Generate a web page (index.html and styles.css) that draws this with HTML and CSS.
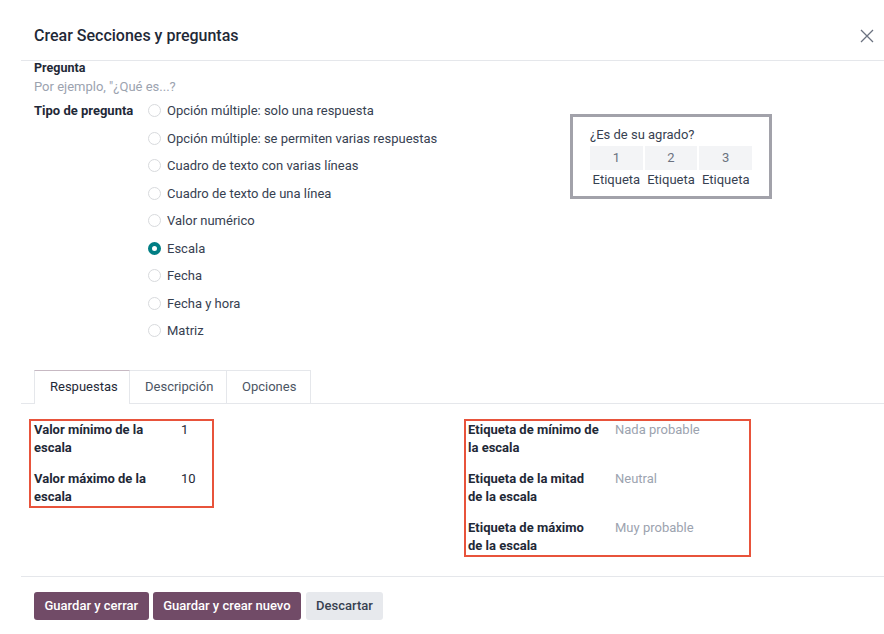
FILE: index.html
```html
<!DOCTYPE html>
<html lang="es">
<head>
    <meta charset="UTF-8">
    <meta name="viewport" content="width=device-width, initial-scale=1.0">
    <title>Crear Secciones y preguntas</title>
    <link rel="stylesheet" href="styles.css">
</head>
<body>
    <div class="modal">
        <!-- Cabecera -->
        <header class="modal-header">
            <h4 class="modal-title">Crear Secciones y preguntas</h4>
            <button class="btn-close" aria-label="Cerrar">
                <svg width="14" height="14" viewBox="0 0 14 14"><path d="M1 1L13 13M13 1L1 13" stroke="#6b7280" stroke-width="1.3" fill="none"/></svg>
            </button>
        </header>

        <!-- Cuerpo -->
        <main class="modal-body">
            <div class="field-question">
                <div class="question-label">Pregunta</div>
                <div class="question-input">Por ejemplo, "¿Qué es...?</div>
            </div>

            <div class="type-row">
                <div class="type-label">Tipo de pregunta</div>
                <ul class="radio-list">
                    <li><span class="radio"></span>Opción múltiple: solo una respuesta</li>
                    <li><span class="radio"></span>Opción múltiple: se permiten varias respuestas</li>
                    <li><span class="radio"></span>Cuadro de texto con varias líneas</li>
                    <li><span class="radio"></span>Cuadro de texto de una línea</li>
                    <li><span class="radio"></span>Valor numérico</li>
                    <li><span class="radio checked"></span>Escala</li>
                    <li><span class="radio"></span>Fecha</li>
                    <li><span class="radio"></span>Fecha y hora</li>
                    <li><span class="radio"></span>Matriz</li>
                </ul>
                <div class="preview">
                    <div class="preview-title">¿Es de su agrado?</div>
                    <div class="preview-grid">
                        <div class="cell">1</div>
                        <div class="cell">2</div>
                        <div class="cell">3</div>
                        <div class="cell-label">Etiqueta</div>
                        <div class="cell-label">Etiqueta</div>
                        <div class="cell-label">Etiqueta</div>
                    </div>
                </div>
            </div>

            <!-- Pestañas -->
            <ul class="tabs">
                <li class="tab active">Respuestas</li>
                <li class="tab">Descripción</li>
                <li class="tab">Opciones</li>
            </ul>

            <div class="tab-content">
                <div class="group group-left">
                    <div class="row">
                        <div class="row-label">Valor mínimo de la escala</div>
                        <div class="row-value">1</div>
                    </div>
                    <div class="row">
                        <div class="row-label">Valor máximo de la escala</div>
                        <div class="row-value">10</div>
                    </div>
                </div>
                <div class="group group-right">
                    <div class="row">
                        <div class="row-label">Etiqueta de mínimo de la escala</div>
                        <div class="row-value muted">Nada probable</div>
                    </div>
                    <div class="row">
                        <div class="row-label">Etiqueta de la mitad de la escala</div>
                        <div class="row-value muted">Neutral</div>
                    </div>
                    <div class="row">
                        <div class="row-label">Etiqueta de máximo de la escala</div>
                        <div class="row-value muted">Muy probable</div>
                    </div>
                </div>
            </div>
        </main>

        <!-- Pie -->
        <footer class="modal-footer">
            <button class="btn btn-primary">Guardar y cerrar</button>
            <button class="btn btn-primary">Guardar y crear nuevo</button>
            <button class="btn btn-secondary">Descartar</button>
        </footer>
        <div class="modal-shadow"></div>
    </div>
</body>
</html>
```

FILE: styles.css
```css
body {
    margin: 0;
    font-family: Roboto, "Liberation Sans", sans-serif;
    font-size: 13px;
    color: #374151;
    background-color: #fff;
}

.modal {
    width: 884px;
    height: 634px;
    overflow: hidden;
}

/* Cabecera */
.modal-header {
    display: flex;
    justify-content: space-between;
    align-items: flex-start;
    height: 61px;
    margin-left: 21px;
    padding: 26px 10px 0 13px;
    border-bottom: 1px solid #e5e7eb;
    box-sizing: border-box;
}

.modal-title {
    margin: 0;
    font-size: 16px;
    font-weight: 500;
    line-height: 20px;
    color: #1f2937;
}

.btn-close {
    border: none;
    background: none;
    padding: 0;
    width: 14px;
    height: 14px;
    margin-top: 3px;
}

/* Cuerpo */
.modal-body {
    padding-left: 34px;
}

.question-label {
    font-weight: 700;
    color: #1f2937;
    line-height: 13px;
    font-size: 12.5px;
}

.question-input {
    color: #9ca3af;
    line-height: 20px;
    padding-top: 3px;
}

.type-row {
    display: flex;
    align-items: flex-start;
}

.type-label {
    width: 114px;
    flex: none;
    font-weight: 700;
    color: #1f2937;
    line-height: 27.5px;
}

.radio-list {
    list-style: none;
    margin: 0;
    padding: 0;
    flex: 1;
}

.radio-list li {
    display: flex;
    align-items: center;
    height: 27.5px;
}

.radio {
    width: 13px;
    height: 13px;
    border: 1px solid #d8dadd;
    border-radius: 50%;
    box-sizing: border-box;
    margin-right: 6px;
}

.radio.checked {
    border: 4px solid #017e84;
}

/* Vista previa de la escala */
.preview {
    width: 202px;
    margin-top: 17px;
    margin-right: 112px;
    border: 3px solid #a2a2aa;
    box-sizing: border-box;
    padding: 10px 17px 7px;
}

.preview-title {
    line-height: 16px;
    color: #374151;
}

.preview-grid {
    display: grid;
    grid-template-columns: 1fr 1fr 1fr;
    column-gap: 2px;
    margin-top: 3px;
}

.cell {
    background-color: #f3f4f6;
    height: 24px;
    line-height: 24px;
    text-align: center;
    color: #6b7280;
}

.cell-label {
    text-align: center;
    line-height: 18px;
    margin-top: 1px;
}

/* Pestañas */
.tabs {
    list-style: none;
    display: flex;
    margin: 25px 0 0 -13px;
    padding: 0 0 0 13px;
    border-bottom: 1px solid #e5e7eb;
}

.tab {
    height: 33px;
    line-height: 32px;
    padding: 0 15px;
    color: #4b5563;
    border: 1px solid #e5e7eb;
    border-bottom: none;
    margin-bottom: -1px;
    box-sizing: border-box;
    background-color: #fff;
}

.tab + .tab {
    border-left: none;
}

.tab.active {
    color: #1f2937;
    border-top-color: #c7b9c3;
    height: 34px;
}

.tab:nth-child(1) { width: 96px; }
.tab:nth-child(2) { width: 97px; }
.tab:nth-child(3) { width: 84px; }

.tab-content {
    display: flex;
    align-items: flex-start;
    margin: 15px 0 0 -5px;
}

.group {
    border: 2px solid #e8533b;
    padding: 0 0 0 3px;
    display: flex;
    flex-direction: column;
    gap: 13px;
}

.group-left {
    width: 185px;
    box-sizing: border-box;
}

.group-right {
    width: 287px;
    box-sizing: border-box;
    margin-left: 250px;
    padding-left: 2px;
}

.row {
    display: flex;
    line-height: 18px;
}

.row-label {
    width: 132px;
    flex: none;
    font-weight: 700;
    color: #1f2937;
    margin-right: 15px;
}

.row-value {
    color: #1f2937;
}

.row-value.muted {
    color: #9ca3af;
}

/* Pie */
.modal-footer {
    margin: 19px 0 0 21px;
    padding: 15px 13px 14px;
    border-top: 1px solid #e5e7eb;
    display: flex;
    gap: 4px;
}

.btn {
    height: 28px;
    padding: 0 10.5px;
    border: none;
    border-radius: 3px;
    font-family: Roboto, "Liberation Sans", sans-serif;
    font-size: 13px;
    font-weight: 500;
}

.btn-primary {
    background-color: #714b67;
    color: #fff;
}

.btn-secondary {
    background-color: #e7e9ed;
    color: #374151;
    padding: 0 10px;
    margin-left: 1px;
}

.modal-shadow {
    height: 20px;
    margin-left: 10px;
    background: linear-gradient(#fff, #f4f4f5);
}
```
